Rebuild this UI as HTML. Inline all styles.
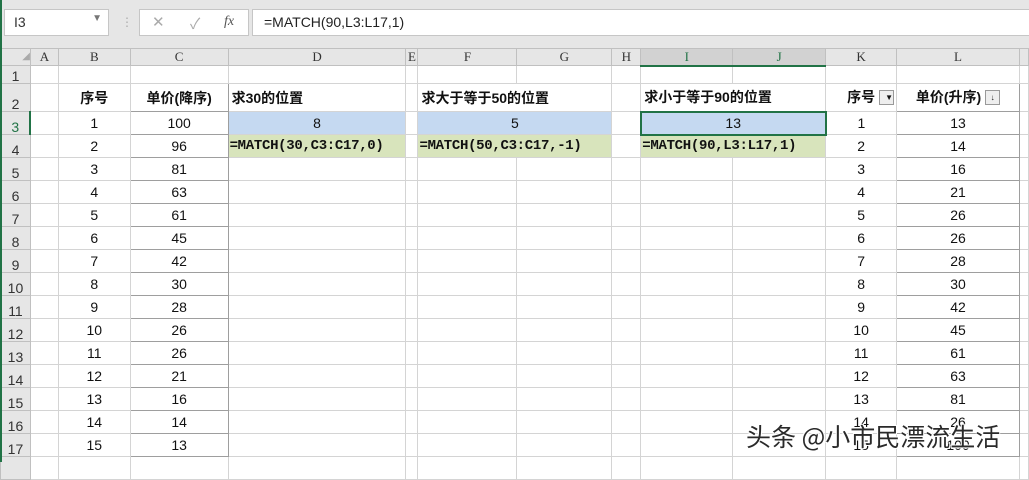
<!DOCTYPE html>
<html><head><meta charset="utf-8"><style>
body{margin:0;width:1029px;height:462px;overflow:hidden;background:#fff;font-family:"Liberation Sans","Noto Sans CJK SC",sans-serif;position:relative}
.tb{position:absolute;left:0;top:0;width:1029px;height:48px;background:#e6e6e6}
.box{position:absolute;background:#fff;border:1px solid #c6c6c6;height:25px;top:9px}
table{position:absolute;left:0;top:48px;border-collapse:collapse;table-layout:fixed}
td{border:1px solid #d4d4d4;padding:0;font-size:14px;text-align:center;overflow:hidden;white-space:nowrap;color:#111;line-height:14px}
tr.h td{background:#e6e6e6;border-color:#c0c0c0;font-family:"Liberation Serif",serif;font-size:13px;color:#333}
td.rh{background:#e6e6e6;border-color:#c0c0c0;font-size:14px;color:#333;text-align:center;vertical-align:bottom}
.b{font-weight:bold;font-family:"Liberation Sans","Noto Sans CJK SC",sans-serif;font-size:14px}
.tl{border:1px solid #9e9e9e}
.bl{background:#c5d9f1}.gr{background:#d8e4bc;font-family:"Liberation Mono",monospace;font-weight:bold;font-size:14px;text-align:left;padding-left:1px;letter-spacing:-0.3px}
.lt{text-align:left;padding-left:3px}
</style></head><body>
<div class="tb"></div>
<div style="position:absolute;left:0;top:0;width:2px;height:462px;background:#217346;z-index:3"></div>
<div class="box" style="left:4px;width:103px"><span style="position:absolute;left:9px;top:4px;font-size:14px;color:#333">I3</span><span style="position:absolute;right:6px;top:3px;font-size:10px;color:#777">▼</span></div>
<div style="position:absolute;left:121px;top:15px;color:#aaa;font-size:12px">⋮</div>
<div class="box" style="left:139px;width:108px"><span style="position:absolute;left:12px;top:3px;color:#aaa;font-size:15px">✕</span><span style="position:absolute;left:50px;top:3px;color:#aaa;font-size:15px">✓</span><span style="position:absolute;left:84px;top:4px;color:#555;font-style:italic;font-family:'Liberation Serif',serif;font-size:14px">fx</span></div>
<div class="box" style="left:252px;width:780px"><span style="position:absolute;left:11px;top:4px;font-size:14px;color:#222">=MATCH(90,L3:L17,1)</span></div>
<table>
<colgroup><col style="width:30px"><col style="width:28px"><col style="width:72px"><col style="width:98px"><col style="width:178px"><col style="width:12px"><col style="width:99px"><col style="width:95px"><col style="width:29px"><col style="width:92px"><col style="width:93px"><col style="width:71px"><col style="width:123px"><col style="width:9px"></colgroup>
<tr class="h" style="height:17px"><td style="font-size:10px;color:#aaa;text-align:right">◢</td><td>A</td><td>B</td><td>C</td><td>D</td><td>E</td><td>F</td><td>G</td><td>H</td><td style="background:#d2d2d2;color:#217346;border-bottom:2px solid #217346">I</td><td style="background:#d2d2d2;color:#217346;border-bottom:2px solid #217346">J</td><td>K</td><td>L</td><td></td></tr>
<tr style="height:18px"><td class="rh">1</td><td></td><td></td><td></td><td></td><td></td><td></td><td></td><td></td><td></td><td></td><td></td><td></td><td></td></tr>
<tr style="height:28px"><td class="rh">2</td><td></td><td class="b">序号</td><td class="b tl">单价(降序)</td><td class="b lt">求30的位置</td><td></td><td class="b lt" colspan="2">求大于等于50的位置</td><td></td><td class="b lt" colspan="2">求小于等于90的位置</td><td class="b" style="text-align:right;padding-right:2px">序号 <span style="display:inline-block;width:13px;height:13px;border:1px solid #999;background:#eee;font-size:8px;vertical-align:middle;line-height:13px">▼</span></td><td class="b tl">单价(升序) <span style="display:inline-block;width:13px;height:13px;border:1px solid #999;background:#eee;font-size:8px;vertical-align:middle;line-height:13px">↓</span></td><td></td></tr>
<tr style="height:23px"><td class="rh" style="color:#217346;border-right:2px solid #217346">3</td><td></td><td>1</td><td class="tl">100</td><td class="bl">8</td><td></td><td class="bl" colspan="2">5</td><td></td><td class="bl" colspan="2" style="border:2px solid #217346">13</td><td>1</td><td class="tl">13</td><td></td></tr>
<tr style="height:23px"><td class="rh">4</td><td></td><td>2</td><td class="tl">96</td><td class="gr">=MATCH(30,C3:C17,0)</td><td></td><td class="gr" colspan="2">=MATCH(50,C3:C17,-1)</td><td></td><td class="gr" colspan="2">=MATCH(90,L3:L17,1)</td><td>2</td><td class="tl">14</td><td></td></tr>
<tr style="height:23px"><td class="rh">5</td><td></td><td>3</td><td class="tl">81</td><td></td><td></td><td></td><td></td><td></td><td></td><td></td><td>3</td><td class="tl">16</td><td></td></tr>
<tr style="height:23px"><td class="rh">6</td><td></td><td>4</td><td class="tl">63</td><td></td><td></td><td></td><td></td><td></td><td></td><td></td><td>4</td><td class="tl">21</td><td></td></tr>
<tr style="height:23px"><td class="rh">7</td><td></td><td>5</td><td class="tl">61</td><td></td><td></td><td></td><td></td><td></td><td></td><td></td><td>5</td><td class="tl">26</td><td></td></tr>
<tr style="height:23px"><td class="rh">8</td><td></td><td>6</td><td class="tl">45</td><td></td><td></td><td></td><td></td><td></td><td></td><td></td><td>6</td><td class="tl">26</td><td></td></tr>
<tr style="height:23px"><td class="rh">9</td><td></td><td>7</td><td class="tl">42</td><td></td><td></td><td></td><td></td><td></td><td></td><td></td><td>7</td><td class="tl">28</td><td></td></tr>
<tr style="height:23px"><td class="rh">10</td><td></td><td>8</td><td class="tl">30</td><td></td><td></td><td></td><td></td><td></td><td></td><td></td><td>8</td><td class="tl">30</td><td></td></tr>
<tr style="height:23px"><td class="rh">11</td><td></td><td>9</td><td class="tl">28</td><td></td><td></td><td></td><td></td><td></td><td></td><td></td><td>9</td><td class="tl">42</td><td></td></tr>
<tr style="height:23px"><td class="rh">12</td><td></td><td>10</td><td class="tl">26</td><td></td><td></td><td></td><td></td><td></td><td></td><td></td><td>10</td><td class="tl">45</td><td></td></tr>
<tr style="height:23px"><td class="rh">13</td><td></td><td>11</td><td class="tl">26</td><td></td><td></td><td></td><td></td><td></td><td></td><td></td><td>11</td><td class="tl">61</td><td></td></tr>
<tr style="height:23px"><td class="rh">14</td><td></td><td>12</td><td class="tl">21</td><td></td><td></td><td></td><td></td><td></td><td></td><td></td><td>12</td><td class="tl">63</td><td></td></tr>
<tr style="height:23px"><td class="rh">15</td><td></td><td>13</td><td class="tl">16</td><td></td><td></td><td></td><td></td><td></td><td></td><td></td><td>13</td><td class="tl">81</td><td></td></tr>
<tr style="height:23px"><td class="rh">16</td><td></td><td>14</td><td class="tl">14</td><td></td><td></td><td></td><td></td><td></td><td></td><td></td><td>14</td><td class="tl">26</td><td></td></tr>
<tr style="height:23px"><td class="rh">17</td><td></td><td>15</td><td class="tl">13</td><td></td><td></td><td></td><td></td><td></td><td></td><td></td><td>15</td><td class="tl">100</td><td></td></tr>
<tr style="height:23px"><td class="rh"></td><td></td><td></td><td></td><td></td><td></td><td></td><td></td><td></td><td></td><td></td><td></td><td></td><td></td></tr>
</table>
<div style="position:absolute;left:746px;top:418px;font-size:25px;color:#2a2a2a;font-family:'Noto Sans CJK SC',sans-serif;text-shadow:1px 1px 0 #fff,-1px -1px 0 #fff,1px -1px 0 #fff,-1px 1px 0 #fff;z-index:5;white-space:nowrap">头条 @小市民漂流生活</div>
</body></html>
